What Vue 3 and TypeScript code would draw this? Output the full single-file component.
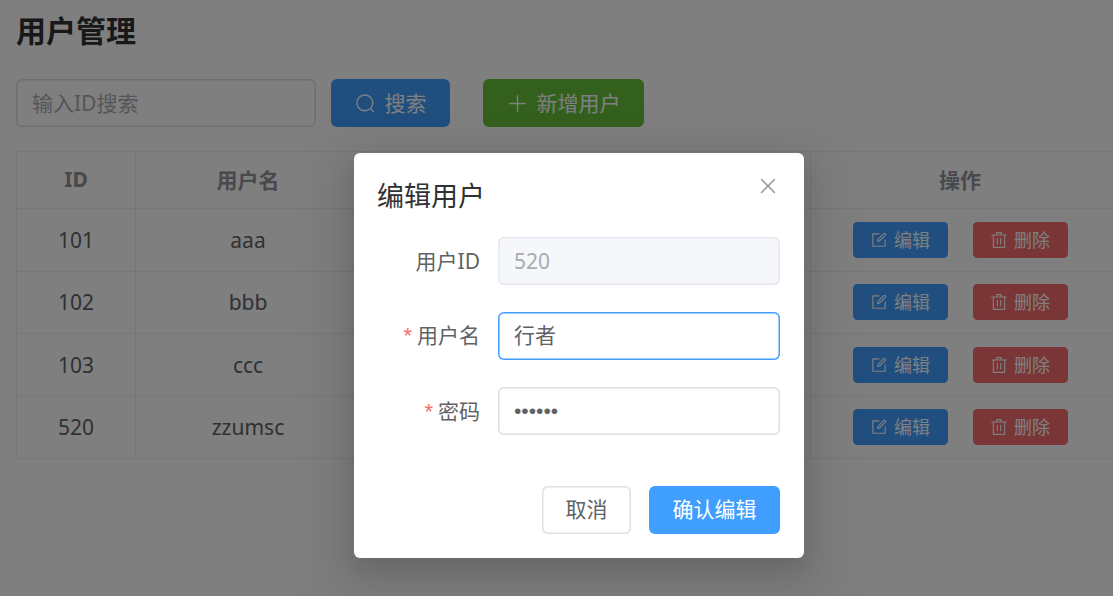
<script setup lang="ts">
interface User { id: number; name: string }
const users: User[] = [
  { id: 101, name: 'aaa' },
  { id: 102, name: 'bbb' },
  { id: 103, name: 'ccc' },
  { id: 520, name: 'zzumsc' },
]
</script>

<template>
  <div class="page">
    <h1 class="title">用户管理</h1>
    <div class="toolbar">
      <div class="search-input">输入ID搜索</div>
      <button class="btn primary search-btn">
        <svg class="ico" viewBox="0 0 1024 1024" fill="currentColor"><path d="m795.904 750.72 124.992 124.928a32 32 0 0 1-45.248 45.248L750.656 795.904a416 416 0 1 1 45.248-45.248zM480 832a352 352 0 1 0 0-704 352 352 0 0 0 0 704z"/></svg>
        <span class="cjk-up">搜索</span>
      </button>
      <button class="btn success add-btn">
        <svg class="ico" viewBox="0 0 1024 1024" fill="currentColor"><path d="M480 480V128a32 32 0 0 1 64 0v352h352a32 32 0 1 1 0 64H544v352a32 32 0 1 1-64 0V544H128a32 32 0 0 1 0-64h352z"/></svg>
        <span class="cjk-up">新增用户</span>
      </button>
    </div>
    <div class="table">
      <div class="row head">
        <div class="cell c-id">ID</div>
        <div class="cell c-name">用户名</div>
        <div class="cell c-mid"></div>
        <div class="cell c-op">操作</div>
      </div>
      <div v-for="u in users" :key="u.id" class="row">
        <div class="cell c-id">{{ u.id }}</div>
        <div class="cell c-name">{{ u.name }}</div>
        <div class="cell c-mid"></div>
        <div class="cell c-op">
          <button class="mini primary">
            <svg class="mini-ico" viewBox="0 0 1024 1024" fill="currentColor"><path d="M832 512a32 32 0 1 1 64 0v352a32 32 0 0 1-32 32H160a32 32 0 0 1-32-32V160a32 32 0 0 1 32-32h352a32 32 0 0 1 0 64H192v640h640V512z"/><path d="m469.952 554.24 52.8-7.552L847.104 222.4a32 32 0 1 0-45.248-45.248L477.44 501.44l-7.552 52.8zm422.4-422.4a96 96 0 0 1 0 135.808l-331.84 331.84a32 32 0 0 1-18.112 9.088L436.8 623.68a32 32 0 0 1-36.224-36.224l15.104-105.6a32 32 0 0 1 9.024-18.112l331.904-331.84a96 96 0 0 1 135.744 0z"/></svg>
            <span class="cjk-up">编辑</span>
          </button>
          <button class="mini danger">
            <svg class="mini-ico" viewBox="0 0 1024 1024" fill="currentColor"><path d="M160 256H96a32 32 0 0 1 0-64h256V95.936a32 32 0 0 1 32-32h256a32 32 0 0 1 32 32V192h256a32 32 0 1 1 0 64h-64v672a32 32 0 0 1-32 32H192a32 32 0 0 1-32-32V256zm448-64v-64H416v64h192zM224 896h576V256H224v640zm192-128a32 32 0 0 1-32-32V416a32 32 0 0 1 64 0v320a32 32 0 0 1-32 32zm192 0a32 32 0 0 1-32-32V416a32 32 0 0 1 64 0v320a32 32 0 0 1-32 32z"/></svg>
            <span class="cjk-up">删除</span>
          </button>
        </div>
      </div>
    </div>

    <div class="overlay">
      <div class="dialog">
        <div class="dialog-head">
          <span class="dialog-title">编辑用户</span>
          <svg class="close" viewBox="0 0 1024 1024" fill="currentColor"><path d="M764.288 214.592 512 466.88 259.712 214.592a31.936 31.936 0 0 0-45.12 45.12L466.752 512 214.528 764.224a31.936 31.936 0 1 0 45.12 45.184L512 557.184l252.288 252.288a31.936 31.936 0 0 0 45.12-45.12L557.12 512.064l252.288-252.352a31.936 31.936 0 1 0-45.12-45.184z"/></svg>
        </div>
        <div class="form">
          <div class="form-row">
            <label class="label">用户ID</label>
            <div class="field disabled">520</div>
          </div>
          <div class="form-row">
            <label class="label req up"><span class="star">*</span>用户名</label>
            <div class="field focused">行者</div>
          </div>
          <div class="form-row">
            <label class="label req"><span class="star">*</span>密码</label>
            <div class="field dots">••••••</div>
          </div>
        </div>
        <div class="dialog-foot">
          <button class="foot-btn cancel">取消</button>
          <button class="foot-btn confirm">确认编辑</button>
        </div>
      </div>
    </div>
  </div>
</template>

<style scoped>
.page {
  position: relative;
  box-sizing: border-box;
  width: 1113px;
  height: 596px;
  overflow: hidden;
  padding: 16px 0 0 16px;
  background: #fff;
  color: #606266;
  font-family: "Noto Sans", "Noto Sans CJK SC", sans-serif;
}
button { font-family: inherit; border: 0; cursor: pointer; }
.title {
  margin: 0;
  font-size: 30px;
  line-height: 30px;
  font-weight: 700;
  color: #303133;
}
.toolbar {
  display: flex;
  align-items: center;
  margin-top: 33px;
}
.search-input {
  box-sizing: border-box;
  width: 300px;
  height: 48px;
  padding-left: 16px;
  border-radius: 6px;
  box-shadow: inset 0 0 0 1.5px #dcdfe6;
  font-size: 21px;
  line-height: 48px;
  color: #a8abb2;
}
.btn {
  display: flex;
  align-items: center;
  justify-content: center;
  gap: 9px;
  height: 48px;
  border-radius: 6px;
  color: #fff;
  font-size: 21px;
}
.cjk-up { margin-top: -2px; }
.ico { width: 21px; height: 21px; }
.search-btn { width: 119px; margin-left: 15px; }
.add-btn { width: 161px; margin-left: 33px; }
.primary { background: #409eff; }
.success { background: #67c23a; }
.danger { background: #f56c6c; }
.table {
  box-sizing: border-box;
  width: 1097px;
  margin-top: 24px;
  border-top: 1px solid #ebeef5;
  border-left: 1px solid #ebeef5;
}
.row {
  display: flex;
  height: 62.5px;
  box-sizing: border-box;
  border-bottom: 1px solid #ebeef5;
}
.row.head {
  height: 57px;
  font-weight: 700;
  color: #909399;
}
.head .cell { padding-bottom: 3px; }
.cell {
  box-sizing: border-box;
  display: flex;
  align-items: center;
  justify-content: center;
  font-size: 21px;
  border-right: 1px solid #ebeef5;
}
.c-id { width: 119px; }
.c-name { width: 225px; }
.c-mid { width: 450px; }
.c-op { flex: 1; border-right: 0; gap: 25px; padding-right: 4px; }
.mini {
  display: flex;
  align-items: center;
  justify-content: center;
  gap: 6px;
  width: 95px;
  height: 36px;
  border-radius: 4.5px;
  color: #fff;
  font-size: 18px;
}
.mini-ico { width: 18px; height: 18px; }
.overlay {
  position: absolute;
  inset: 0;
  background: rgba(0, 0, 0, 0.5);
}
.dialog {
  position: absolute;
  left: 354px;
  top: 153px;
  box-sizing: border-box;
  width: 450px;
  height: 405px;
  display: flex;
  flex-direction: column;
  padding: 24px;
  background: #fff;
  border-radius: 6px;
  box-shadow: 0 18px 48px 24px rgba(0, 0, 0, 0.08), 0 12px 24px rgba(0, 0, 0, 0.12);
}
.dialog-head {
  position: relative;
  height: 40px;
}
.dialog-title {
  display: block;
  margin-left: -1px;
  font-size: 27px;
  line-height: 38px;
  color: #303133;
}
.close {
  position: absolute;
  top: -3px;
  right: 0;
  width: 24px;
  height: 24px;
  color: #909399;
}
.form {
  display: flex;
  flex-direction: column;
  gap: 27px;
  margin-top: 20px;
}
.form-row { display: flex; align-items: flex-start; }
.label {
  width: 120px;
  height: 48px;
  padding-right: 18px;
  box-sizing: border-box;
  text-align: right;
  font-size: 21px;
  line-height: 48px;
  color: #606266;
}
.label.up { line-height: 46px; }
.star {
  margin-right: 5px;
  color: #f56c6c;
  font-family: "Liberation Sans", sans-serif;
  font-size: 22px;
}
.field {
  box-sizing: border-box;
  width: 282px;
  height: 48px;
  padding-left: 16px;
  border-radius: 6px;
  box-shadow: inset 0 0 0 1.5px #dcdfe6;
  font-size: 21px;
  line-height: 48px;
  color: #606266;
}
.field.disabled {
  background: #f5f7fa;
  box-shadow: inset 0 0 0 1.5px #e4e7ed;
  color: #a8abb2;
}
.field.focused { box-shadow: inset 0 0 0 1.5px #409eff; line-height: 46px; }
.field.dots { font-family: "Liberation Sans", sans-serif; }
.dialog-foot {
  display: flex;
  justify-content: flex-end;
  gap: 18px;
  margin-top: auto;
}
.foot-btn {
  height: 48px;
  padding: 0 0 4px;
  border-radius: 6px;
  font-size: 21px;
}
.cancel {
  width: 89px;
  background: #fff;
  color: #606266;
  box-shadow: inset 0 0 0 1.5px #dcdfe6;
}
.confirm {
  width: 131px;
  background: #409eff;
  color: #fff;
}
</style>
